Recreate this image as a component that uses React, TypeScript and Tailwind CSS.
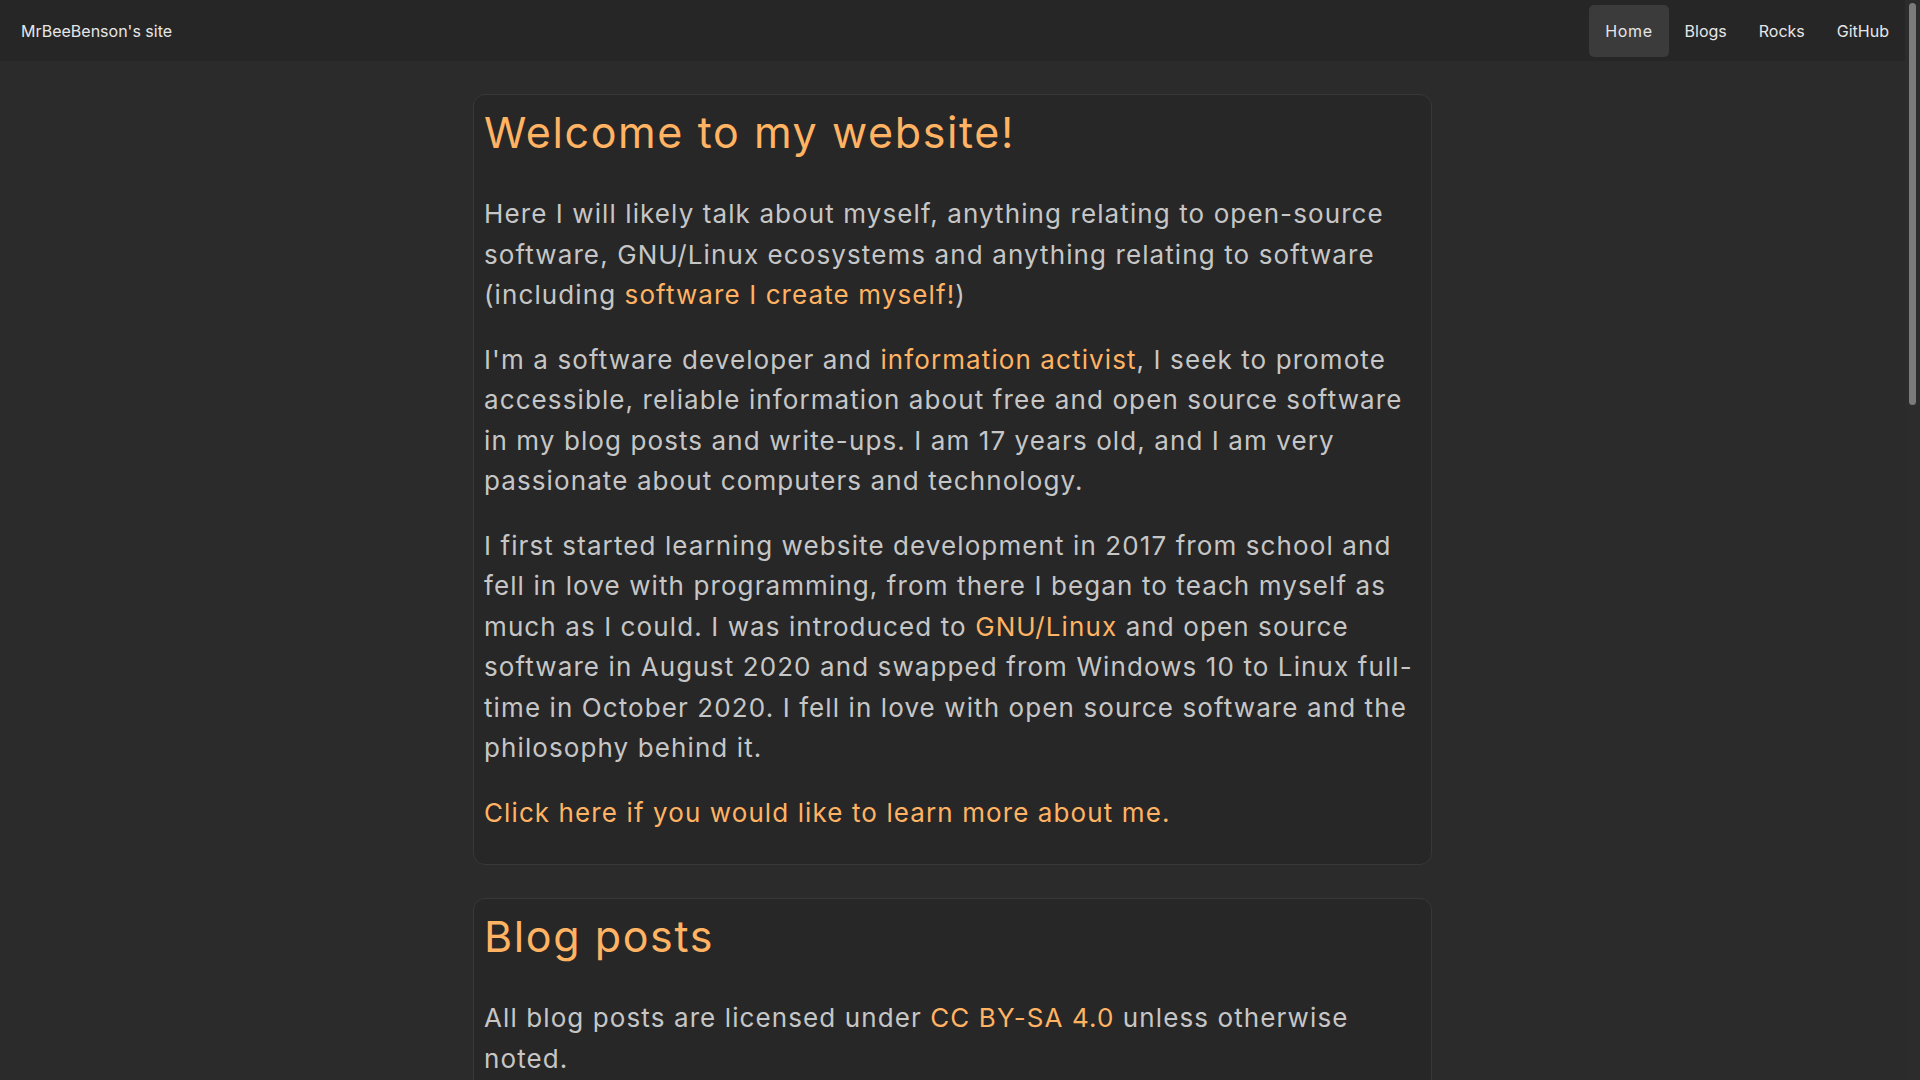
const links = ['Home', 'Blogs', 'Rocks', 'GitHub'];

function Accent({ children }: { children: React.ReactNode }) {
  return <a className="text-[#ffb363] cursor-pointer">{children}</a>;
}

function Card({ title, children }: { title: string; children: React.ReactNode }) {
  return (
    <section className="w-[959px] mx-auto mb-[33px] bg-[#272727] border border-[#383838] rounded-[12px] p-[10px]">
      <h1 className="text-[43px] leading-[50px] tracking-[1.6px] text-[#ffb363] mt-[2px] mb-[37px]">{title}</h1>
      {children}
    </section>
  );
}

function App() {
  return (
    <div
      className="h-screen flex overflow-hidden bg-[#2b2b2b] text-[#c6c6c6]"
      style={{ fontFamily: 'Inter, "Open Sans", sans-serif' }}
    >
      <div className="flex-1 min-w-0 overflow-hidden">
        <nav className="h-[61px] bg-[#262626] flex items-center justify-between pl-[21px]">
          <span className="text-[16px] text-[#e6e6e6]">MrBeeBenson's site</span>
          <ul className="flex">
            {links.map((l) => (
              <li
                key={l}
                className={
                  'h-[52px] px-4 flex items-center rounded-[5px] text-[16px] text-[#e6e6e6] ' +
                  (l === 'Home' ? 'bg-[#3b3b3b] tracking-[0.6px]' : '')
                }
              >
                {l}
              </li>
            ))}
          </ul>
        </nav>

        <main className="pt-[33px] text-[26px] leading-[40.5px] tracking-[1.1px]">
          <Card title="Welcome to my website!">
            <p className="mb-6">
              Here I will likely talk about myself, anything relating to open-source software, GNU/Linux
              ecosystems and anything relating to software (including <Accent>software I create myself!</Accent>)
            </p>
            <p className="mb-6">
              I'm a software developer and <Accent>information activist</Accent>, I seek to promote accessible,
              reliable information about free and open source software in my blog posts and write-ups. I am 17
              years old, and I am very passionate about computers and technology.
            </p>
            <p className="mb-6">
              I first started learning website development in 2017 from school and fell in love with programming,
              from there I began to teach myself as much as I could. I was introduced to <Accent>GNU/Linux</Accent>{' '}
              and open source software in August 2020 and swapped from Windows 10 to Linux full-time in October
              2020. I fell in love with open source software and the philosophy behind it.
            </p>
            <p className="mb-[21px]">
              <Accent>Click here if you would like to learn more about me.</Accent>
            </p>
          </Card>

          <Card title="Blog posts">
            <p className="mb-6">
              All blog posts are licensed under <Accent>CC BY-SA 4.0</Accent> unless otherwise noted.
            </p>
          </Card>
        </main>
      </div>

      {/* page scrollbar */}
      <aside className="w-[15px] shrink-0 bg-[#2c2c2c] flex justify-center">
        <div className="w-[7px] h-[402px] mt-[3px] rounded-full bg-[#7b7b7b]" />
      </aside>
    </div>
  );
}

export default App;
